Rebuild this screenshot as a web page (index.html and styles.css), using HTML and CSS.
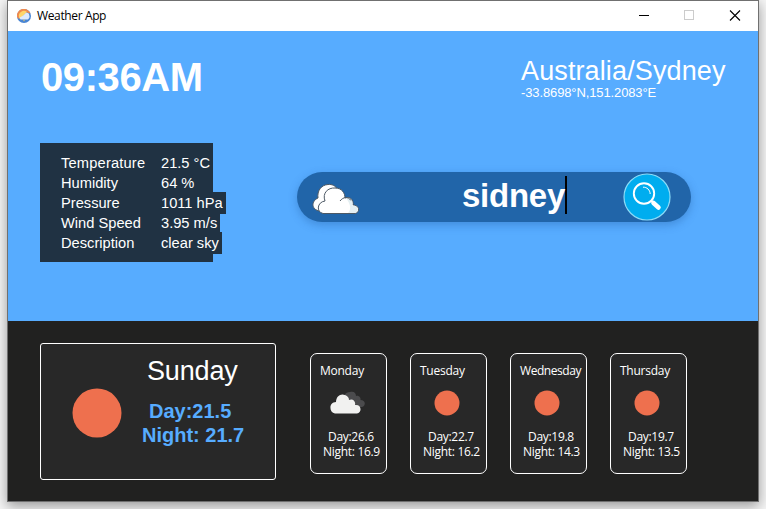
FILE: index.html
```html
<!DOCTYPE html>
<html lang="en">
<head>
<meta charset="utf-8">
<title>Weather App</title>
<link rel="stylesheet" href="styles.css">
</head>
<body>
<main class="window">
  <header class="titlebar">
    <svg class="app-icon" width="14" height="14" viewBox="0 0 14 14">
      <circle cx="7" cy="7" r="7" fill="#4784d4"/>
      <path d="M0 8A7 7 0 0 1 13.500 4.500L9 3.200 2 10Z" fill="#f08a4e"/>
      <path d="M2 8A5 5 0 0 1 10 3L3 10Z" fill="#ffd56a"/>
      <path d="M3.500 10.500L2.500 8.500C4 8 6 7 7.800 5C8.800 3.200 12 3.500 12.200 6C13.200 8 12 10 10.800 10.500Z" fill="#dfe9fb"/>
      <path d="M7 10.500v1.700" stroke="#ffd15a" stroke-width="1"/>
    </svg>
    <h1 class="app-name">Weather App</h1>
    <svg class="controls" width="102" height="12" viewBox="0 0 102 12" fill="none">
      <path d="M0 5.500H10" stroke="#000"/>
      <rect x="45.500" y=".5" width="9" height="9" stroke="#ccc"/>
      <path d="M91 .5L101 10.500M101 .5L91 10.500" stroke="#000" stroke-width="1.100"/>
    </svg>
  </header>

  <section class="current">
    <div class="top-row">
      <div class="clock">09:36AM</div>
      <div class="place">
        <div class="zone">Australia/Sydney</div>
        <div class="coords">-33.8698°N,151.2083°E</div>
      </div>
    </div>
    <div class="middle-row">
      <dl class="stats">
        <dt>Temperature</dt><dd><span>21.5 °C</span></dd>
        <dt>Humidity</dt><dd><span>64 %</span></dd>
        <dt>Pressure</dt><dd><span>1011 hPa</span></dd>
        <dt>Wind Speed</dt><dd><span>3.95 m/s</span></dd>
        <dt>Description</dt><dd><span>clear sky</span></dd>
      </dl>
      <div class="search">
        <svg class="search-cloud" width="50" height="34" viewBox="0 0 50 34" stroke="#4d5965" stroke-width="1" stroke-linejoin="round">
          <path d="M9 28C0 27 0 18 7 15C6 8 10 2 17 1.500C21 1 25 3 26 6L28 25Z" fill="#fff"/>
          <path d="M12 30.500C5 29 6 19 14 18C11 10 17 4.500 24 5C31 5 34 10 34 15C39 13 43 17 42 22C48 22 50 29 44 30.500Z" fill="#fff"/>
          <path d="M44 30C49 28 47 22 41.500 22.500C42 17 39 14 35 15C39 20 41 26 37 30Z" fill="#e4eff2" stroke="none"/>
          <path d="M29 18C32 14 37 13 40 17.500" fill="none"/>
        </svg>
        <span class="query">sidney</span>
        <svg class="search-button" width="48" height="48" viewBox="0 0 48 48" fill="none">
          <circle cx="24" cy="24" r="23" fill="#00adef" stroke="#8bdcf8" stroke-width="1.200"/>
          <circle cx="21" cy="20.500" r="10.200" stroke="#fff" stroke-width="1.900"/>
          <path d="M20 14.200C24 14 27 17 27.200 21" stroke="#fff" stroke-width="1"/>
          <path d="M28 27.500L30.500 30" stroke="#fff" stroke-width="2"/>
          <path d="M30.500 30L35.500 34.500" stroke="#fff" stroke-width="4.500" stroke-linecap="round"/>
        </svg>
      </div>
    </div>
  </section>

  <section class="forecast">
    <article class="today">
      <svg class="sun" viewBox="0 0 50 50"><circle cx="25" cy="25" r="24.500" fill="#ee704e"/></svg>
      <div class="today-info">
        <h2>Sunday</h2>
        <p class="today-day">Day:21.5</p>
        <p class="today-night">Night: 21.7</p>
      </div>
    </article>
    <div class="days">
      <article class="day">
        <h3>Monday</h3>
        <svg class="cloud" viewBox="0 0 36 26">
          <path d="M15 12C13 6 15 2 20 2C24 1 26 3 26 6C29 5 31 8 30.500 10C36 10 36 16 32 17H22Z" fill="#4b4b4d"/>
          <path d="M5 23.500C-1.500 22 -1 12 6 12C6 6 11 3 15 5C18 6 19 8 19 10C23 8 26 12 25 15C32 14 32 23 27 23.500Z" fill="#f1f1f0"/>
        </svg>
        <p class="high">Day:26.6</p><p class="low">Night: 16.9</p>
      </article>
      <article class="day">
        <h3>Tuesday</h3>
        <svg class="small-sun" viewBox="0 0 26 26"><circle cx="13" cy="13" r="12.500" fill="#ee704e"/></svg>
        <p class="high">Day:22.7</p><p class="low">Night: 16.2</p>
      </article>
      <article class="day">
        <h3 class="wide">Wednesday</h3>
        <svg class="small-sun" viewBox="0 0 26 26"><circle cx="13" cy="13" r="12.500" fill="#ee704e"/></svg>
        <p class="high">Day:19.8</p><p class="low">Night: 14.3</p>
      </article>
      <article class="day">
        <h3>Thursday</h3>
        <svg class="small-sun" viewBox="0 0 26 26"><circle cx="13" cy="13" r="12.500" fill="#ee704e"/></svg>
        <p class="high">Day:19.7</p><p class="low">Night: 13.5</p>
      </article>
    </div>
  </section>
</main>
</body>
</html>
```

FILE: styles.css
```css
* { box-sizing: border-box; }
body {
  margin: 0;
  padding-left: 7px;
  height: 509px;
  overflow: hidden;
  background: #f5f5f5;
  font-family: "Liberation Sans", Arial, sans-serif;
  color: #fff;
}
h1, h2, h3, p, dl, dd { margin: 0; font-weight: 400; }
svg { display: block; flex: none; }

.window {
  width: 752px;
  height: 502px;
  border: 1px solid #707070;
  box-shadow: 0 4px 12px rgba(0, 0, 0, .38);
}
.titlebar {
  display: flex;
  align-items: center;
  height: 30px;
  padding: 0 17px 0 9px;
  background: #fff;
  color: #000;
}
.app-name {
  margin-left: 6px;
  font: 12px/16px "Open Sans", "Noto Sans", sans-serif;
  letter-spacing: -.37px;
}
.controls { margin-left: auto; }

.current { height: 290px; padding: 26px 31px 0 32px; background: #57acff; }
.top-row { display: flex; justify-content: space-between; height: 86px; }
.clock { margin-left: 1px; font-size: 40px; line-height: 40px; font-weight: 700; letter-spacing: -.4px; }
.place { width: 206px; white-space: nowrap; }
.zone { height: 27px; padding-top: 1px; font-size: 27px; line-height: 27px; letter-spacing: .12px; }
.coords {
  width: fit-content;
  padding-right: 10px;
  font-size: 13px;
  line-height: 18px;
  letter-spacing: -.12px;
  background: #57acff;
  position: relative;
}
.middle-row { display: flex; align-items: flex-start; }
.stats {
  display: grid;
  grid-template-columns: 100px 1fr;
  grid-auto-rows: 20px;
  align-content: start;
  width: 173px;
  height: 119px;
  padding: 10px 0 0 21px;
  background: #203243;
  font-size: 14.67px;
  line-height: 20px;
  white-space: nowrap;
}
.stats dt:first-child { letter-spacing: .18px; }
.stats span { display: inline-block; padding-right: 3px; background: #203243; box-shadow: 0 1px #203243, 0 -1px #203243; }
.search {
  display: flex;
  align-items: center;
  width: 394px;
  height: 50px;
  margin: 29px 0 0 84px;
  padding: 0 20px 0 14px;
  border-radius: 25px;
  background: #2165a9;
  box-shadow: 0 3px 8px rgba(25, 80, 150, .35);
}
.search-cloud { margin-top: 5px; }
.query {
  margin: -4px 0 0 101px;
  height: 38px;
  line-height: 39px;
  font-size: 33px;
  font-weight: 700;
  letter-spacing: -.25px;
  border-right: 2px solid #000;
}
.search-button { margin-left: auto; }

.forecast { display: flex; height: 180px; padding: 22px 0 0 32px; background: #212120; }
.today {
  display: flex;
  width: 236px;
  height: 137px;
  border: 1px solid #fff;
  border-radius: 3px;
  background: #282828;
}
.sun { width: 50px; height: 50px; margin: 44px 0 0 30.500px; }
.today-info { margin: 11px 0 0 20.500px; white-space: nowrap; }
.today-info h2 { margin-left: 5px; font-size: 27px; line-height: 32px; letter-spacing: -.15px; }
.today-info p { font-size: 20px; line-height: 24px; font-weight: 700; color: #57acff; }
.today-info .today-day { margin: 12px 0 0 7px; }
.days { display: flex; gap: 23px; margin: 10px 0 0 34px; }
.day {
  width: 77px;
  height: 121px;
  padding: 9px 0 0 9px;
  border: 1px solid #fff;
  border-radius: 7px;
  background: #282828;
  font: 12px/15px "Open Sans", "Noto Sans", sans-serif;
  letter-spacing: -.3px;
  white-space: nowrap;
}
.day h3 { font: inherit; letter-spacing: -.25px; }
.day .wide { letter-spacing: -.45px; }
.small-sun { width: 26px; height: 26px; margin: 12px 0 13px 14px; }
.cloud { width: 36px; height: 26px; margin: 12px 0 13px 10px; }
.high { margin-left: 8px; }
.low { margin-left: 3px; }
```
